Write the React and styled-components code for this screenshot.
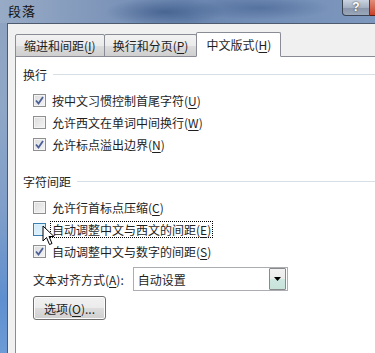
import React from 'react';
import styled, { createGlobalStyle } from 'styled-components';

const GlobalStyle = createGlobalStyle`
    html, body {
        margin: 0;
        padding: 0;
        overflow: hidden;
    }
    body {
        font-family: "Noto Sans CJK SC", "Liberation Sans", sans-serif;
        font-size: 12px;
        color: #1e1e1e;
    }
`;

const Window = styled.div`
    position: relative;
    width: 375px;
    height: 353px;
    display: flex;
    flex-direction: column;
    background: linear-gradient(180deg, #8ea2c0 0%, #8fa7c7 30%, #7f9ec9 60%, #5f8fcf 85%, #6d9bd6 100%);
    overflow: hidden;
`;

const TitleBar = styled.div`
    height: 23px;
    flex: none;
    display: flex;
    align-items: center;
    justify-content: space-between;
    padding-left: 8px;
    background:
        radial-gradient(ellipse 60px 14px at 165px 12px, rgba(40, 70, 120, 0.55), transparent),
        radial-gradient(ellipse 70px 12px at 260px 8px, rgba(50, 80, 130, 0.45), transparent),
        linear-gradient(90deg, #98abc6 0%, #8198bb 25%, #6a86b0 50%, #7590b8 75%, #7d97bd 100%);
`;

const Title = styled.span`
    font-size: 13px;
    line-height: 16px;
    color: #111;
    letter-spacing: 1px;
    margin-top: -2px;
`;

const Caption = styled.div`
    align-self: flex-start;
    display: flex;
`;

const HelpButton = styled.div`
    width: 26px;
    height: 15px;
    border: 1px solid #3a4352;
    border-top: none;
    border-radius: 0 0 0 4px;
    background: linear-gradient(180deg, #c9d3e0 0%, #a5b1c2 50%, #8996aa 51%, #9ba8bb 100%);
    color: #fff;
    font-family: "Liberation Sans", sans-serif;
    font-weight: bold;
    font-size: 12px;
    line-height: 15px;
    text-align: center;
    text-shadow: 0 0 2px #333;
`;

const CloseButton = styled.div`
    width: 5px;
    height: 15px;
    background: linear-gradient(180deg, #e08c7c, #c7412a);
    border-bottom: 1px solid #5a1a10;
`;

const Body = styled.div`
    flex: 1;
    margin-left: 7px;
    border-left: 1px solid #4e5b6e;
    border-top: 1px solid #4e5b6e;
    background: #f0f0f0;
    padding: 9px 0 0 7px;
    display: flex;
    flex-direction: column;
    min-height: 0;
`;

const TabStrip = styled.div`
    flex: none;
    display: flex;
    align-items: flex-end;
    height: 24px;
    position: relative;
    z-index: 1;
    margin-bottom: -1px;
`;

const Tab = styled.div`
    height: ${p => (p.$active ? 25 : 23)}px;
    box-sizing: border-box;
    padding: 0 ${p => (p.$active ? 9 : 8)}px;
    margin-left: ${p => (p.$first ? 0 : -1)}px;
    display: flex;
    align-items: center;
    border: 1px solid #898c95;
    border-bottom: ${p => (p.$active ? '1px solid #fff' : '1px solid #898c95')};
    border-radius: 2px 2px 0 0;
    background: ${p => (p.$active ? '#fff' : 'linear-gradient(180deg, #f2f2f2 0%, #ebebeb 50%, #dddddd 51%, #cfcfcf 100%)')};
    color: #1e1e1e;
    white-space: nowrap;
    position: relative;
    z-index: ${p => (p.$active ? 2 : 1)};
`;

const Panel = styled.div`
    flex: 1;
    min-height: 0;
    background: #fff;
    border: 1px solid #898c95;
    border-right: none;
    border-bottom: none;
    padding: 9px 0 0 7px;
    position: relative;
    display: flex;
    flex-direction: column;
`;

const GroupHeader = styled.div`
    flex: none;
    display: flex;
    align-items: center;
    height: 16px;
    gap: 6px;
    margin-top: ${p => p.$top || 0}px;

    &:after {
        content: '';
        flex: 1;
        height: 1px;
        background: #d5dfe5;
        margin-top: 1px;
    }
`;

const Options = styled.div`
    flex: none;
    display: flex;
    flex-direction: column;
    margin-top: 7px;
    padding-left: 10px;
`;

const Row = styled.div`
    flex: none;
    height: 22px;
    display: flex;
    align-items: center;
    gap: 4px;
`;

const Box = styled.span`
    width: 11px;
    height: 11px;
    flex: none;
    border: 1px solid ${p => (p.$hover ? '#3c7fb1' : '#8e8f8f')};
    background: ${p => (p.$hover
        ? 'linear-gradient(135deg, #cde9fa 0%, #e5f4fc 100%)'
        : 'linear-gradient(135deg, #dcdcdc 0%, #f4f4f4 100%)')};
    box-shadow: inset 0 0 0 1px ${p => (p.$hover ? '#def2fc' : '#f4f4f4')};
    display: flex;
    align-items: center;
    justify-content: center;
`;

const Label = styled.span`
    white-space: nowrap;
    padding: 0 1px;
    line-height: 15px;
    border: 1px ${p => (p.$focus ? 'dotted #000' : 'solid transparent')};
`;

const Key = styled.span`
    text-decoration: underline;
    text-underline-offset: 2px;
`;

const FieldRow = styled.div`
    flex: none;
    display: flex;
    align-items: center;
    gap: 9px;
    margin-top: 5px;
    padding-left: 10px;
`;

const Select = styled.div`
    width: 149px;
    height: 22px;
    border: 1px solid #abadb3;
    display: flex;
    align-items: center;
    justify-content: space-between;
    padding-left: 4px;
    background: #fff;
`;

const SelectArrow = styled.div`
    width: 15px;
    height: 20px;
    border: 1px solid #8a8a8a;
    border-radius: 1px;
    margin-right: 1px;
    background: linear-gradient(180deg, #f2f2f2 0%, #ebebeb 50%, #cfe8e1 51%, #c6e3da 100%);
    display: flex;
    align-items: center;
    justify-content: center;
`;

const Button = styled.div`
    flex: none;
    width: 71px;
    height: 22px;
    margin: 5px 0 0 10px;
    border: 1px solid #707070;
    border-radius: 3px;
    background: linear-gradient(180deg, #f2f2f2 0%, #ebebeb 50%, #dddddd 51%, #cfcfcf 100%);
    box-shadow: inset 0 0 0 1px #fcfcfc;
    display: flex;
    align-items: center;
    justify-content: center;
`;

const Pointer = styled.svg`
    position: absolute;
    left: 26px;
    top: 168px;
    z-index: 5;
`;

const Check = () => (
    <svg width="9" height="9" viewBox="0 0 9 9">
        <path d="M1 4.5 L3.5 7.5 L8 1" fill="none" stroke="#4a5f97" strokeWidth="1.8" />
    </svg>
);

const Checkbox = ({ checked, hover, focus, text, hotkey }) => (
    <Row>
        <Box $hover={hover}>{checked && <Check />}</Box>
        <Label $focus={focus}>
            {text}(<Key>{hotkey}</Key>)
        </Label>
    </Row>
);

export default function App() {
    return (
        <>
            <GlobalStyle />
            <Window>
                <TitleBar>
                    <Title>段落</Title>
                    <Caption>
                        <HelpButton>?</HelpButton>
                        <CloseButton />
                    </Caption>
                </TitleBar>
                <Body>
                    <TabStrip>
                        <Tab $first>缩进和间距(<Key>I</Key>)</Tab>
                        <Tab>换行和分页(<Key>P</Key>)</Tab>
                        <Tab $active>中文版式(<Key>H</Key>)</Tab>
                    </TabStrip>
                    <Panel>
                        <GroupHeader>换行</GroupHeader>
                        <Options>
                            <Checkbox checked text="按中文习惯控制首尾字符" hotkey="U" />
                            <Checkbox text="允许西文在单词中间换行" hotkey="W" />
                            <Checkbox checked text="允许标点溢出边界" hotkey="N" />
                        </Options>
                        <GroupHeader $top={18}>字符间距</GroupHeader>
                        <Options>
                            <Checkbox text="允许行首标点压缩" hotkey="C" />
                            <Checkbox hover focus text="自动调整中文与西文的间距" hotkey="E" />
                            <Checkbox checked text="自动调整中文与数字的间距" hotkey="S" />
                        </Options>
                        <FieldRow>
                            <span>文本对齐方式(<Key>A</Key>):</span>
                            <Select>
                                <span>自动设置</span>
                                <SelectArrow>
                                    <svg width="7" height="4" viewBox="0 0 7 4">
                                        <path d="M0 0 H7 L3.5 4 Z" fill="#000" />
                                    </svg>
                                </SelectArrow>
                            </Select>
                        </FieldRow>
                        <Button>选项(<Key>O</Key>)...</Button>
                        <Pointer width="14" height="22" viewBox="0 0 14 22">
                            <path d="M1 1 L1 16 L4.5 12.5 L7.5 19.5 L10 18.5 L7 11.5 L12 11.5 Z" fill="#fff" stroke="#000" strokeWidth="1" strokeLinejoin="round" />
                        </Pointer>
                    </Panel>
                </Body>
            </Window>
        </>
    );
}
